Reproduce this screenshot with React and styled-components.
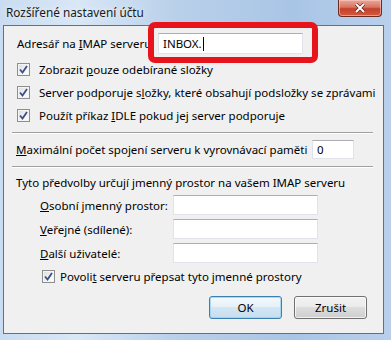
import React from "react";
import styled, { createGlobalStyle } from "styled-components";

const GlobalStyle = createGlobalStyle`
  html, body {
    margin: 0;
    padding: 0;
    background: #ffffff;
  }
  body {
    font-family: "Noto Sans", "Open Sans", sans-serif;
    font-size: 11.5px;
    color: #000;
  }
`;

const Window = styled.div`
  position: relative;
  width: 391px;
  height: 340px;
  display: flex;
  flex-direction: column;
  box-sizing: border-box;
  background: linear-gradient(90deg, #c9dcf1 0%, #d9e7f6 20%, #b9d0ea 45%, #a9c5e6 75%, #b8d0ec 100%);
  overflow: hidden;
`;

const TitleBar = styled.div`
  height: 25px;
  flex-shrink: 0;
  display: flex;
  justify-content: space-between;
  align-items: flex-start;
  padding-left: 6px;
`;

const Title = styled.div`
  margin-top: 4px;
  font-size: 11.8px;
  color: #1a1a1a;
  text-shadow: 0 0 6px rgba(255, 255, 255, 0.9);
`;

const CloseButton = styled.div`
  width: 44px;
  height: 17px;
  margin-right: 9px;
  box-sizing: border-box;
  border: 1px solid #6c2a20;
  border-top: none;
  border-radius: 0 0 4px 4px;
  background: linear-gradient(180deg, #e9a99b 0%, #d8735f 45%, #c4402a 55%, #d45a3f 100%);
  box-shadow: inset 0 0 0 1px rgba(255, 210, 200, 0.55);
  display: flex;
  align-items: center;
  justify-content: center;
`;

const Client = styled.div`
  flex: 1;
  margin: 0 7px 6px 3px;
  border: 1px solid #5f7186;
  background: #f0f0f0;
  display: flex;
  flex-direction: column;
`;

const Row = styled.div`
  display: flex;
  align-items: center;
  height: ${(p) => p.$h || 20}px;
  margin-top: ${(p) => p.$mt || 0}px;
  padding-left: ${(p) => p.$pl || 0}px;
  white-space: nowrap;
`;

const Label = styled.div`
  width: ${(p) => p.$w}px;
  flex-shrink: 0;
`;

const TextBox = styled.div`
  width: ${(p) => p.$w}px;
  height: ${(p) => p.$h || 20}px;
  box-sizing: border-box;
  background: #fff;
  border: 1px solid #e2e3ea;
  border-top-color: #abadb3;
  display: flex;
  align-items: center;
  padding-left: 4px;
`;

const Caret = styled.span`
  display: inline-block;
  width: 1px;
  height: 14px;
  background: #000;
  margin-left: 1px;
`;

const CheckBox = styled.div`
  width: 13px;
  height: 13px;
  box-sizing: border-box;
  border: 1px solid #8f8f8f;
  background: linear-gradient(135deg, #dcdcdc 0%, #f4f4f4 60%, #ffffff 100%);
  box-shadow: inset 0 0 0 1px #f4f4f4;
  flex-shrink: 0;
  margin-right: ${(p) => p.$gap || 9}px;
  display: flex;
  align-items: center;
  justify-content: center;
`;

const Separator = styled.div`
  margin: ${(p) => p.$mt}px 10px 0 8px;
  border-top: 1px solid #a0a0a0;
  border-bottom: 1px solid #ffffff;
`;

const ButtonBar = styled.div`
  display: flex;
  justify-content: flex-end;
  gap: 12px;
  margin-top: 10px;
  padding-right: 16px;
`;

const Button = styled.div`
  width: 73px;
  height: 23px;
  box-sizing: border-box;
  border: 1px solid ${(p) => (p.$default ? "#3c7fb1" : "#707070")};
  border-radius: 3px;
  background: ${(p) =>
    p.$default
      ? "linear-gradient(180deg, #f4f9fc 0%, #e6f1f8 45%, #d3e6f3 50%, #c6def0 100%)"
      : "linear-gradient(180deg, #f2f2f2 0%, #ebebeb 45%, #dddddd 50%, #cfcfcf 100%)"};
  box-shadow: inset 0 0 0 1px ${(p) => (p.$default ? "rgba(150, 210, 240, 0.8)" : "rgba(255,255,255,0.7)")};
  display: flex;
  align-items: center;
  justify-content: center;
`;

const Highlight = styled.div`
  position: absolute;
  left: 148px;
  top: 22px;
  width: 170px;
  height: 41px;
  box-sizing: border-box;
  border: 6px solid #e8141b;
  border-radius: 7px;
`;

const Check = ({ gap }) => (
  <CheckBox $gap={gap}>
    <svg width="9" height="9" viewBox="0 0 9 9">
      <path d="M1 4.5 L3.5 7.5 L8 1" fill="none" stroke="#3b4f86" strokeWidth="1.8" />
    </svg>
  </CheckBox>
);

const App = () => (
  <>
    <GlobalStyle />
    <Window>
      <TitleBar>
        <Title>Rozšířené nastavení účtu</Title>
        <CloseButton>
          <svg width="12" height="10" viewBox="0 0 12 10">
            <path d="M2 1 L10 9 M10 1 L2 9" stroke="#5a1a10" strokeWidth="3.2" />
            <path d="M2 1 L10 9 M10 1 L2 9" stroke="#ffffff" strokeWidth="2" />
          </svg>
        </CloseButton>
      </TitleBar>
      <Client>
        <Row $h={21} $mt={7} $pl={13}>
          <Label $w={141}>
            Adresář na <u>I</u>MAP serveru:
          </Label>
          <TextBox $w={145} $h={21}>
            INBOX.<Caret />
          </TextBox>
        </Row>
        <Row $h={23} $mt={4} $pl={13}>
          <Check />
          <span>
            Zobrazit <u>p</u>ouze odebírané složky
          </span>
        </Row>
        <Row $h={23} $pl={13}>
          <Check />
          <span>
            Server podporuje s<u>l</u>ožky, které obsahují podsložky se zprávami
          </span>
        </Row>
        <Row $h={23} $pl={13}>
          <Check />
          <span>
            Použít příkaz <u>I</u>DLE pokud jej server podporuje
          </span>
        </Row>
        <Separator $mt={5} />
        <Row $h={19} $mt={6} $pl={12}>
          <Label $w={296}>
            <u>M</u>aximální počet spojení serveru k vyrovnávací paměti
          </Label>
          <TextBox $w={42} $h={19}>
            0
          </TextBox>
        </Row>
        <Separator $mt={7} />
        <Row $h={16} $mt={6} $pl={12}>
          Tyto předvolby určují jmenný prostor na vašem IMAP serveru
        </Row>
        <Row $mt={5} $pl={36}>
          <Label $w={133}>
            <u>O</u>sobní jmenný prostor:
          </Label>
          <TextBox $w={145} />
        </Row>
        <Row $mt={4} $pl={36}>
          <Label $w={133}>
            <u>V</u>eřejné (sdílené):
          </Label>
          <TextBox $w={145} />
        </Row>
        <Row $mt={4} $pl={36}>
          <Label $w={133}>
            <u>D</u>alší uživatelé:
          </Label>
          <TextBox $w={145} />
        </Row>
        <Row $mt={3} $pl={38}>
          <Check gap={5} />
          <span>
            Povoli<u>t</u> serveru přepsat tyto jmenné prostory
          </span>
        </Row>
        <ButtonBar>
          <Button $default>OK</Button>
          <Button>Zrušit</Button>
        </ButtonBar>
      </Client>
      <Highlight />
    </Window>
  </>
);

export default App;
